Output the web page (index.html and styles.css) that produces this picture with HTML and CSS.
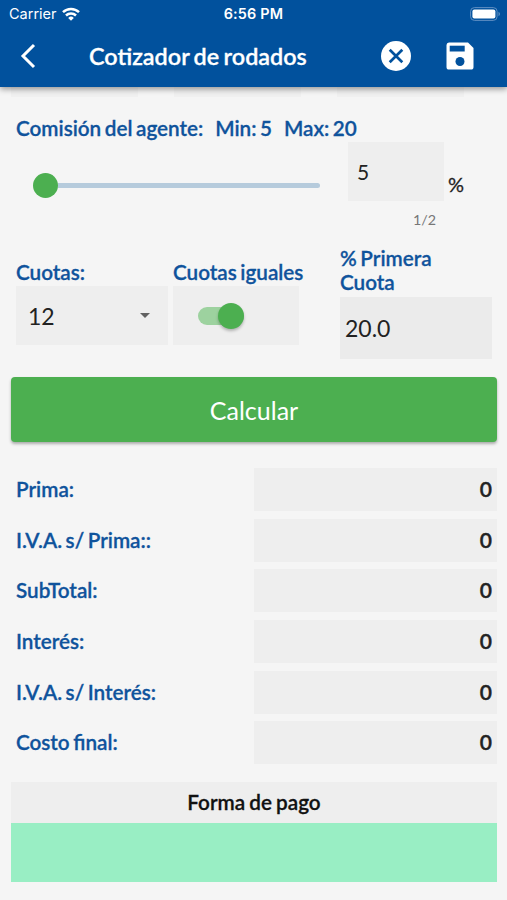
FILE: index.html
```html
<!DOCTYPE html>
<html lang="es">
<head>
    <meta charset="UTF-8">
    <meta name="viewport" content="width=device-width, initial-scale=1.0">
    <title>Cotizador de rodados</title>
    <link rel="stylesheet" href="styles.css">
</head>
<body>

<header>
    <!-- Barra de estado -->
    <div class="status">
        <div class="carrier">
            <span>Carrier</span>
            <svg width="18" height="14" viewBox="0 0 18 14" fill="none" stroke="#fff" stroke-width="2.5">
                <path d="M1 5.2a11.4 11.4 0 0 1 16 0"/>
                <path d="M4 8.5a7.1 7.1 0 0 1 10 0"/>
                <path d="M9 13.7L6.2 10.9a4 4 0 0 1 5.6 0z" fill="#fff" stroke="none"/>
            </svg>
        </div>
        <span class="time">6:56 PM</span>
        <svg class="battery" width="31" height="14" viewBox="0 0 31 14">
            <rect x="0.6" y="0.6" width="26.5" height="12.8" rx="3.8" fill="none" stroke="#5f8fc2"/>
            <rect x="2.4" y="2.4" width="23" height="9.2" rx="2" fill="#fff"/>
            <path d="M28.5 4.8c2 .8 2 3.6 0 4.4z" fill="#5f8fc2"/>
        </svg>
    </div>
    <div class="toolbar">
        <svg class="back" width="16" height="26" viewBox="0 0 16 26" fill="none" stroke="#fff" stroke-width="3">
            <path d="M14 2L3 13l11 11"/>
        </svg>
        <h1>Cotizador de rodados</h1>
        <svg class="cancel" width="30" height="30" viewBox="0 0 30 30">
            <circle cx="15" cy="15" r="15" fill="#fff"/>
            <path d="M8.7 8.7l12.6 12.6M21.3 8.7L8.7 21.3" stroke="#01519d" stroke-width="2.7"/>
        </svg>
        <svg class="save" width="28" height="28" viewBox="0 0 28 28">
            <path d="M3 0.5h19l5.5 5.5v19a2.6 2.6 0 0 1-2.6 2.6H3.1a2.6 2.6 0 0 1-2.6-2.6V3A2.6 2.6 0 0 1 3 .5z" fill="#fff"/>
            <path d="M3.7 3.7h15v5.8h-15z" fill="#01519d"/>
            <circle cx="14" cy="19.5" r="4.5" fill="#01519d"/>
        </svg>
    </div>
</header>

<main>
    <div class="previous">
        <div></div>
        <div></div>
        <div></div>
    </div>

    <!-- Comisión -->
    <div class="limits">
        <span>Comisión del agente:</span>
        <span>Min: 5</span>
        <span>Max: 20</span>
    </div>
    <div class="commission">
        <div class="slider">
            <div class="thumb"></div>
            <div class="track"></div>
        </div>
        <div class="percent">
            <div class="field">5</div>
            <div class="counter">1/2</div>
        </div>
        <span class="sign">%</span>
    </div>

    <!-- Cuotas -->
    <div class="installments">
        <div class="column">
            <label>Cuotas:</label>
            <div class="field select">
                <span>12</span>
                <div class="arrow"></div>
            </div>
        </div>
        <div class="column equal">
            <label>Cuotas iguales</label>
            <div class="field">
                <div class="switch"><div class="knob"></div></div>
            </div>
        </div>
        <div class="column first">
            <label>% Primera Cuota</label>
            <div class="field">20.0</div>
        </div>
    </div>

    <button class="btn-calcular">Calcular</button>

    <!-- Resultados -->
    <div class="results">
        <div class="row"><label>Prima:</label><div class="value">0</div></div>
        <div class="row"><label>I.V.A. s/ Prima::</label><div class="value">0</div></div>
        <div class="row"><label>SubTotal:</label><div class="value">0</div></div>
        <div class="row"><label>Interés:</label><div class="value">0</div></div>
        <div class="row"><label>I.V.A. s/ Interés:</label><div class="value">0</div></div>
        <div class="row"><label>Costo final:</label><div class="value">0</div></div>
    </div>

    <div class="payment">
        <h2>Forma de pago</h2>
        <div class="payment-body"></div>
    </div>
</main>

</body>
</html>
```
FILE: styles.css
```css
* {
    box-sizing: border-box;
}

body {
    font-family: Lato, sans-serif;
    margin: 0;
    height: 900px;
    overflow: hidden;
    background-color: #f5f5f5;
    color: #222;
}

svg {
    display: block;
    flex: none;
}

header {
    position: relative;
    z-index: 1;
    height: 87px;
    background-color: #01519d;
    color: white;
    box-shadow: 0 2px 6px rgba(0, 0, 0, 0.4);
}

.status {
    display: grid;
    grid-template-columns: 1fr auto 1fr;
    align-items: center;
    height: 27px;
    padding: 0 7px;
    font-family: Inter, sans-serif;
    font-size: 14.5px;
}

.carrier {
    display: flex;
    align-items: center;
    gap: 5px;
    margin-left: 2px;
}

.time {
    font-size: 14.4px;
    font-weight: 600;
    letter-spacing: 0.2px;
}

.battery {
    justify-self: end;
    margin-right: -1px;
}

.toolbar {
    display: flex;
    align-items: center;
    height: 58px;
    padding: 0 33px 0 20px;
}

h1 {
    flex: 1;
    margin: 0 0 1px 53px;
    font-size: 23.4px;
    font-weight: 600;
    word-spacing: -1.5px;
    -webkit-text-stroke: 0.3px;
}

.cancel {
    margin-right: 35px;
}

main {
    padding: 0 10px 0 11px;
}

.previous {
    display: flex;
    gap: 36px;
    height: 10px;
}

.previous div {
    width: 127px;
    background-color: #f0f0f0;
}

label, .limits {
    font-size: 20.7px;
    font-weight: 600;
    line-height: 24px;
    word-spacing: -1.6px;
    color: #0f539c;
    -webkit-text-stroke: 0.3px;
}

.limits {
    display: flex;
    gap: 12px;
    margin: 19px 0 0 5px;
}

.field {
    display: flex;
    align-items: center;
    height: 59px;
    background-color: #eeeeee;
    font-size: 23px;
}

.commission {
    display: flex;
    height: 90px;
    margin-top: 2px;
}

.slider {
    display: flex;
    align-items: center;
    width: 287px;
    height: 86px;
    margin-left: 22px;
}

.thumb {
    width: 25px;
    height: 25px;
    border-radius: 50%;
    background-color: #4caf50;
}

.track {
    flex: 1;
    height: 5px;
    border-radius: 0 3px 3px 0;
    background-color: #b6cbdc;
}

.percent {
    width: 96px;
    margin-left: 28px;
}

.percent .field {
    padding-left: 9px;
    font-size: 21px;
}

.counter {
    margin-top: 10px;
    padding-right: 8px;
    font-size: 14.3px;
    text-align: right;
    color: #777;
}

.sign {
    margin: 30px 0 0 4px;
    font-size: 20px;
    -webkit-text-stroke: 0.3px;
}

.installments {
    display: flex;
    align-items: center;
    height: 113px;
    margin: 14px 5px 0;
}

.column {
    width: 152px;
}

.column label {
    display: block;
    margin-bottom: 2px;
}

.select {
    justify-content: space-between;
    padding: 0 18px 0 12px;
}

.arrow {
    border: 5px solid transparent;
    border-top-color: #616161;
    border-bottom: 0;
}

.equal {
    width: 132px;
    margin: 0 35px 0 5px;
}

.equal .field {
    width: 126px;
    padding-left: 25px;
}

.switch {
    display: flex;
    justify-content: flex-end;
    align-items: center;
    width: 46px;
    height: 18px;
    border-radius: 9px;
    background-color: #9dd29f;
}

.knob {
    width: 26px;
    height: 26px;
    border-radius: 50%;
    background-color: #4caf50;
    box-shadow: 0 2px 3px rgba(0, 0, 0, 0.25);
}

.first label {
    width: 120px;
    margin-top: -1px;
    line-height: 24.5px;
}

.first .field {
    height: 62px;
    padding-left: 5px;
    background-color: #ebebeb;
}

.btn-calcular {
    display: block;
    width: 100%;
    height: 65px;
    margin-top: 18px;
    border: none;
    border-radius: 4px;
    background-color: #4caf50;
    box-shadow: 0 2px 3px rgba(0, 0, 0, 0.3);
    color: white;
    font-family: inherit;
    font-size: 25px;
}

.results {
    display: grid;
    gap: 7.8px;
    margin-top: 26px;
}

.row {
    display: flex;
    align-items: center;
    height: 42.9px;
    padding-left: 5px;
}

.row label {
    flex: 1;
    margin-bottom: 1px;
}

.value {
    width: 243px;
    height: 100%;
    padding-right: 5px;
    background-color: #eeeeee;
    font-size: 21px;
    font-weight: 600;
    line-height: 42px;
    text-align: right;
    -webkit-text-stroke: 0.4px;
}

.payment {
    margin-top: 18px;
}

h2 {
    height: 41px;
    margin: 0;
    background-color: #eeeeee;
    font-size: 20.7px;
    font-weight: 600;
    line-height: 40px;
    word-spacing: -1px;
    text-align: center;
    color: #111;
    -webkit-text-stroke: 0.3px;
}

.payment-body {
    height: 59px;
    background-color: #99eec4;
}
```
